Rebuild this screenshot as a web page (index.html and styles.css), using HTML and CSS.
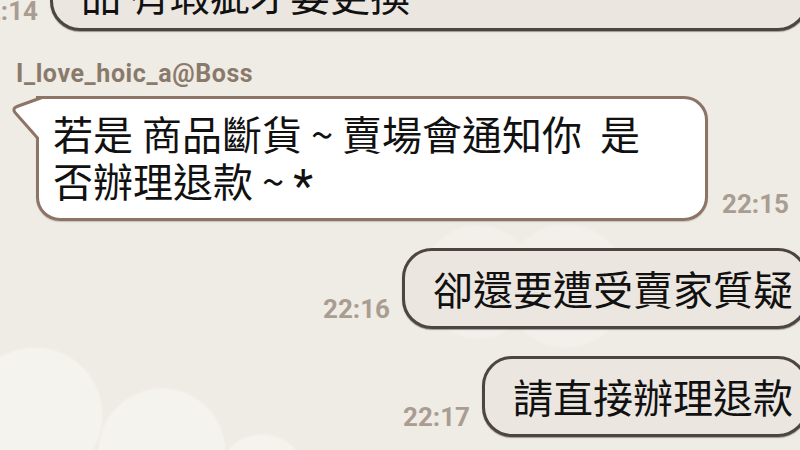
FILE: index.html
```html
<!DOCTYPE html>
<html lang="zh-Hant">
<head>
<meta charset="utf-8">
<title>Chat</title>
<link rel="stylesheet" href="styles.css">
</head>
<body>
<div class="chat">
  <div class="row sent first">
    <span class="time">22:14</span>
    <div class="bubble out wide">品 有瑕疵才要更換</div>
  </div>
  <div class="name">I_love_hoic_a@Boss</div>
  <div class="row recv">
    <div class="bubble in">
      <svg class="tail" width="34" height="44" viewBox="0 0 34 44">
        <polygon points="30,3 6,12 5,16 25,41 34,41 34,3" fill="#ffffff"/>
        <path d="M32 1.5 L7 10.5 Q2 12.5 5 16.5 L27.5 42" fill="none" stroke="#8c7466" stroke-width="3" stroke-linejoin="round"/>
      </svg>
      若是 商品斷貨 ~ 賣場會通知你&nbsp; 是<br>否辦理退款 ~ <span class="star">*</span>
    </div>
    <span class="time">22:15</span>
  </div>
  <div class="row sent">
    <span class="time">22:16</span>
    <div class="bubble out">卻還要遭受賣家質疑</div>
  </div>
  <div class="row sent">
    <span class="time">22:17</span>
    <div class="bubble out">請直接辦理退款</div>
  </div>
</div>
</body>
</html>
```
FILE: styles.css
```css
html, body {
  margin: 0;
  padding: 0;
}
body {
  width: 800px;
  height: 450px;
  overflow: hidden;
  background-color: #efebe5;
  background-image:
    radial-gradient(circle at 35px 415px, #f5f3ee 66px, rgba(245,243,238,0) 69px),
    radial-gradient(circle at 162px 452px, #f5f3ee 62px, rgba(245,243,238,0) 65px),
    radial-gradient(circle at 262px 480px, #f5f3ee 44px, rgba(245,243,238,0) 47px),
    radial-gradient(circle at 478px 282px, #f3f0eb 55px, rgba(243,240,235,0) 58px),
    radial-gradient(circle at 566px 286px, #f3f0eb 60px, rgba(243,240,235,0) 63px);
  font-family: "Noto Sans CJK TC", "Noto Sans", sans-serif;
}
.chat {
  display: flex;
  flex-direction: column;
}
.row {
  display: flex;
  align-items: flex-end;
}
.row.sent {
  justify-content: flex-end;
  gap: 12px;
  margin-right: -8px;
  margin-top: 27px;
}
.row.sent.first {
  margin-top: -50px;
}
.row.recv {
  padding-left: 36px;
  gap: 14px;
  margin-top: 8px;
}
.time {
  flex-shrink: 0;
  font-family: Roboto, "Liberation Sans", sans-serif;
  font-weight: 700;
  font-size: 26px;
  line-height: 30px;
  color: #a99d92;
  margin-bottom: 5px;
}
.recv .time {
  margin-bottom: 2px;
}
.name {
  margin-top: 29px;
  padding-left: 16px;
  font-family: Roboto, "Liberation Sans", sans-serif;
  font-weight: 700;
  font-size: 25px;
  letter-spacing: 0.6px;
  line-height: 28px;
  color: #8a7a6b;
}
.bubble {
  font-size: 40px;
  line-height: 47px;
  color: #111111;
  white-space: nowrap;
}
.star {
  font-family: Roboto, "Liberation Sans", sans-serif;
  font-size: 46px;
  line-height: 0;
  vertical-align: -5px;
}
.bubble.out {
  flex-shrink: 0;
  background: #ebe6e0;
  border: 3px solid #4d4541;
  border-radius: 30px;
  padding: 14px 12px 14px 28px;
  box-shadow: 0 1px 1px rgba(0,0,0,0.35);
}
.bubble.wide {
  width: 758px;
  box-sizing: border-box;
  padding-top: 18px;
  padding-bottom: 10px;
}
.bubble.in {
  position: relative;
  width: 672px;
  box-sizing: border-box;
  background: #ffffff;
  border: 3px solid #8c7466;
  border-radius: 0 24px 24px 24px;
  padding: 11px 14px 14px 14px;
  box-shadow: 0 1px 1px rgba(90,70,60,0.25);
}
.tail {
  position: absolute;
  left: -29px;
  top: -3px;
  display: block;
}
```
